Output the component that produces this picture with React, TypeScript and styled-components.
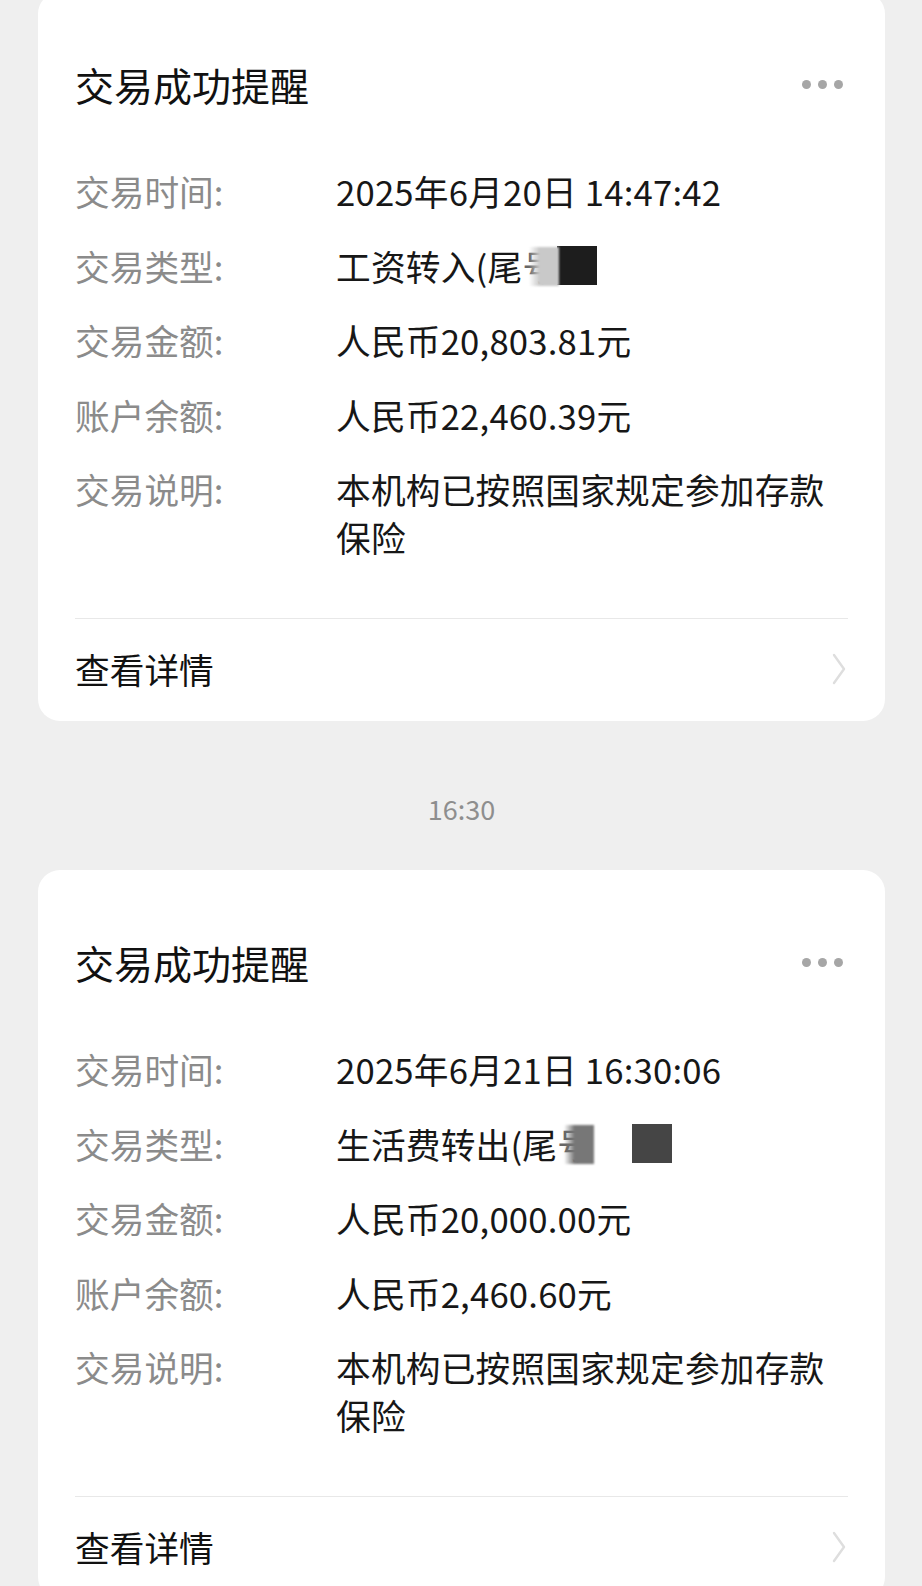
import React from 'react';
import styled, { createGlobalStyle } from 'styled-components';

const GlobalStyle = createGlobalStyle`
  html, body {
    margin: 0;
    padding: 0;
    background: #efefef;
  }
  body {
    font-family: "Noto Sans CJK SC", "Noto Sans", sans-serif;
    -webkit-font-smoothing: antialiased;
  }
`;

const Page = styled.main`
  display: flex;
  flex-direction: column;
  margin-top: -8px;
  padding: 0 37px 0 38px;
`;

const Card = styled.section`
  background: #fff;
  border-radius: 22px;
  padding: 0 37px;
`;

const Header = styled.header`
  display: flex;
  align-items: center;
  justify-content: space-between;
  padding-top: 66px;
`;

const Title = styled.h2`
  margin: 0;
  font-size: 39px;
  font-weight: 400;
  line-height: 52px;
  color: #111;
`;

const More = styled.div`
  display: flex;
  gap: 7px;
  margin-right: 5px;
`;

const Dot = styled.span`
  width: 9px;
  height: 9px;
  border-radius: 50%;
  background: #a6a6a6;
`;

const Rows = styled.dl`
  display: flex;
  flex-direction: column;
  gap: 26.5px;
  margin: 57px 0 57px;
`;

const Row = styled.div`
  display: grid;
  grid-template-columns: 261px 1fr;
  font-size: 34.7px;
  line-height: 48px;
`;

const Label = styled.dt`
  margin: 0;
  color: #8b8b8b;
`;

const Value = styled.dd`
  margin: 0;
  color: #171717;
  max-width: 14.3em;
  letter-spacing: 0.2px;
`;

const Masked = styled.span`
  display: inline-flex;
  align-items: center;
  vertical-align: top;
  height: 48px;
`;

const Covered = styled.span`
  position: relative;
  display: inline-block;
  color: #666;
`;

const Smudge = styled.span<{ $tone: string }>`
  position: absolute;
  top: 5px;
  bottom: 4px;
  left: 0.2em;
  right: -2px;
  background: linear-gradient(90deg, rgba(255, 255, 255, 0) 0%, ${p => p.$tone} 35%);
  filter: blur(1px);
`;

const Block = styled.span<{ $tone: string; $gap?: number }>`
  display: inline-block;
  width: 40px;
  height: 39px;
  margin-left: ${p => p.$gap ?? 0}px;
  background: ${p => p.$tone};
`;

const Divider = styled.hr`
  margin: 0;
  border: 0;
  border-top: 1.5px solid #e8e8e8;
`;

const Footer = styled.footer`
  display: flex;
  align-items: center;
  justify-content: space-between;
  padding: 26px 2px 28px 0;
  font-size: 34.7px;
  line-height: 48px;
  color: #111;
`;

const Stamp = styled.div`
  margin: 73px 0 46px;
  text-align: center;
  font-size: 27px;
  line-height: 30px;
  color: #8e8e8e;
`;

const Chevron = () => (
  <svg width="14" height="32" viewBox="0 0 14 32" fill="none">
    <polyline points="2,2 12,16 2,30" stroke="#dedede" strokeWidth="2.4" strokeLinecap="round" strokeLinejoin="round" />
  </svg>
);

type Notice = {
  time: string;
  kind: string;
  redaction: 'in' | 'out';
  amount: string;
  balance: string;
};

const notices: Notice[] = [
  {
    time: '2025年6月20日 14:47:42',
    kind: '工资转入(尾',
    redaction: 'in',
    amount: '人民币20,803.81元',
    balance: '人民币22,460.39元',
  },
  {
    time: '2025年6月21日 16:30:06',
    kind: '生活费转出(尾',
    redaction: 'out',
    amount: '人民币20,000.00元',
    balance: '人民币2,460.60元',
  },
];

const Redacted: React.FC<{ variant: 'in' | 'out' }> = ({ variant }) =>
  variant === 'in' ? (
    <Masked>
      <Covered>
        号
        <Smudge $tone="#c9c9c9" />
      </Covered>
      <Block $tone="#1d1d1d" />
    </Masked>
  ) : (
    <Masked>
      <Covered>
        号
        <Smudge $tone="#777" />
      </Covered>
      <Block $tone="#454545" $gap={40} />
    </Masked>
  );

const NoticeCard: React.FC<{ n: Notice }> = ({ n }) => (
  <Card>
    <Header>
      <Title>交易成功提醒</Title>
      <More>
        <Dot />
        <Dot />
        <Dot />
      </More>
    </Header>
    <Rows>
      <Row>
        <Label>交易时间:</Label>
        <Value>{n.time}</Value>
      </Row>
      <Row>
        <Label>交易类型:</Label>
        <Value>
          {n.kind}
          <Redacted variant={n.redaction} />
        </Value>
      </Row>
      <Row>
        <Label>交易金额:</Label>
        <Value>{n.amount}</Value>
      </Row>
      <Row>
        <Label>账户余额:</Label>
        <Value>{n.balance}</Value>
      </Row>
      <Row>
        <Label>交易说明:</Label>
        <Value>本机构已按照国家规定参加存款保险</Value>
      </Row>
    </Rows>
    <Divider />
    <Footer>
      查看详情
      <Chevron />
    </Footer>
  </Card>
);

export default function App() {
  return (
    <>
      <GlobalStyle />
      <Page>
        <NoticeCard n={notices[0]} />
        <Stamp>16:30</Stamp>
        <NoticeCard n={notices[1]} />
      </Page>
    </>
  );
}
